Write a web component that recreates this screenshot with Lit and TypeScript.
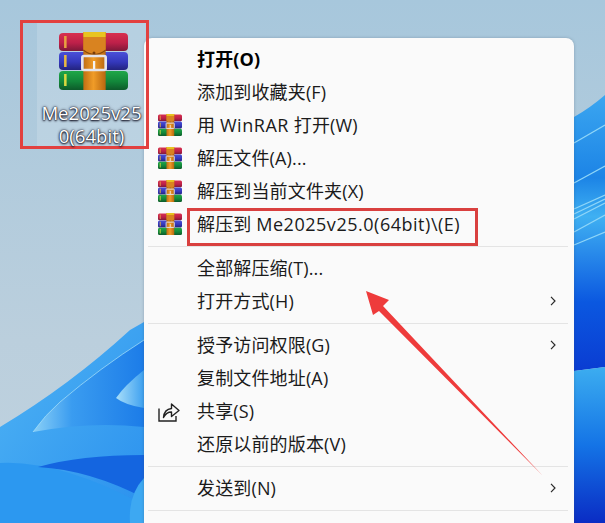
import { LitElement, html, css } from "lit";
import { customElement } from "lit/decorators.js";

const rarIcon = (cls: string, id: string) => html`<svg class=${cls} viewBox="0 0 68 58" preserveAspectRatio="none" aria-hidden="true">
  <defs>
    <linearGradient id="${id}r" x1="0" y1="0" x2="0" y2="1"><stop offset="0" stop-color="#d8304f"/><stop offset=".55" stop-color="#bd2049"/><stop offset="1" stop-color="#7d1838"/></linearGradient>
    <linearGradient id="${id}b" x1="0" y1="0" x2="0" y2="1"><stop offset="0" stop-color="#4a50d8"/><stop offset=".55" stop-color="#3438bc"/><stop offset="1" stop-color="#23237e"/></linearGradient>
    <linearGradient id="${id}g" x1="0" y1="0" x2="0" y2="1"><stop offset="0" stop-color="#1fa748"/><stop offset=".55" stop-color="#12873a"/><stop offset="1" stop-color="#0d5a2a"/></linearGradient>
    <linearGradient id="${id}o" x1="0" y1="0" x2="1" y2="0"><stop offset="0" stop-color="#c06e14"/><stop offset=".45" stop-color="#f09c28"/><stop offset="1" stop-color="#b86610"/></linearGradient>
  </defs>
  <rect x="0" y="1" width="68" height="18" rx="4" fill="url(#${id}r)"/>
  <rect x="0" y="20" width="68" height="18" rx="4" fill="url(#${id}b)"/>
  <rect x="0" y="39" width="68" height="19" rx="4" fill="url(#${id}g)"/>
  <rect x="5" y="4" width="2.5" height="12" fill="#e8a040"/>
  <rect x="5" y="23" width="2.5" height="12" fill="#e8b840"/>
  <rect x="5" y="42" width="2.5" height="12" fill="#d8d840"/>
  <rect x="24" y="0" width="22" height="58" fill="url(#${id}o)"/>
  <rect x="24" y="0" width="22" height="5" fill="#e8c420"/>
  <path d="M24 5 H46 V18 Q35 27 24 18Z" fill="#d98320"/>
  <path d="M24 18 Q35 27 46 18" fill="none" stroke="#8a4a0c" stroke-width="1"/>
  <circle cx="34.5" cy="21" r="1.5" fill="#7a3d08"/>
  <rect x="23" y="24" width="23" height="14" rx="1.5" fill="none" stroke="#e4e4ec" stroke-width="2.6"/>
  <rect x="33.5" y="29" width="2.2" height="8" fill="#f4f4f4"/>
</svg>`;

const shareIcon = html`<svg class="share" viewBox="0 0 22 21" aria-hidden="true">
  <path d="M1 7.5V20H18V15" fill="none" stroke="#222" stroke-width="1.4"/>
  <path d="M5.5 16.5C6 10.5 9 8 13.5 7.5V3L21 9.5L13.5 15.5V11C10.5 11 7.5 12.5 5.5 16.5Z" fill="none" stroke="#222" stroke-width="1.4" stroke-linejoin="round"/>
</svg>`;

const chevron = html`<svg class="chev" viewBox="0 0 6 10" aria-hidden="true"><path d="M1 .8L5 5L1 9.2" fill="none" stroke="#2a2a2a" stroke-width="1.2"/></svg>`;

type Row = { t: string; lat?: string; end?: string; icon?: "rar" | "share"; bold?: boolean; sub?: boolean; mark?: boolean };
const groups: Row[][] = [
  [
    { t: "打开(O)", bold: true },
    { t: "添加到收藏夹(F)" },
    { t: "用 ", lat: "WinRAR", end: " 打开(W)", icon: "rar" },
    { t: "解压文件(A)...", icon: "rar" },
    { t: "解压到当前文件夹(X)", icon: "rar" },
    { t: "解压到 ", lat: "Me2025v25.0(64bit)\\(E)", icon: "rar", mark: true },
  ],
  [{ t: "全部解压缩(T)..." }, { t: "打开方式(H)", sub: true }],
  [
    { t: "授予访问权限(G)", sub: true },
    { t: "复制文件地址(A)" },
    { t: "共享(S)", icon: "share" },
    { t: "还原以前的版本(V)" },
  ],
  [{ t: "发送到(N)", sub: true }],
];

@customElement("app-root")
export class AppRoot extends LitElement {
  static styles = css`
    :host { display: block; width: 605px; height: 523px; position: relative; overflow: hidden; background: #b5cddd; font-family: "Open Sans", "Noto Sans CJK SC", sans-serif; }
    .wall { position: absolute; inset: 0; width: 605px; height: 523px; display: block; }
    .desk { position: absolute; left: 20px; top: 20px; width: 129px; height: 129px; box-sizing: border-box; border: 3px solid #e2403f; z-index: 3; display: flex; flex-direction: column; align-items: center; padding: 9px 0 0 14px; }
    .desk::before { content: ""; position: absolute; left: 14px; right: 0; top: 0; bottom: 0; background: rgba(255,255,255,.16); }
    .big { width: 69px; height: 58px; position: relative; flex: none; margin-left: 3px; }
    .lbl { position: relative; width: 106px; text-align: center; margin-top: 11px; color: #fff; font-size: 18.6px; line-height: 23px; word-break: break-all; text-shadow: 0 1px 2px #112, 0 0 3px #223, 0 0 1px #112; font-family: "Open Sans", sans-serif; }
    .menu { position: absolute; left: 144px; top: 38px; width: 430px; height: 500px; box-sizing: border-box; padding-top: 4.5px; background: #fafafa; border-radius: 8px 8px 0 0; box-shadow: 0 0 3px rgba(60,80,100,.35); z-index: 2; }
    .row { position: relative; height: 33px; display: grid; grid-template-columns: 53px 1fr 24px; align-items: center; color: #1b1b1b; font-size: 18px; letter-spacing: .15px; white-space: nowrap; }
    .txt { position: relative; top: -1px; }
    .row.b { font-weight: 700; color: #000; }
    .lat { letter-spacing: .52px; }
    .slot { display: flex; padding-left: 14px; }
    .mini { width: 24px; height: 22px; display: block; }
    .share { width: 22px; height: 21px; display: block; }
    .chev { width: 6px; height: 10px; display: block; }
    .mark { position: absolute; left: 43px; top: 0px; width: 291px; height: 38px; box-sizing: border-box; border: 3px solid #d9403f; }
    .sep { height: 11px; display: flex; align-items: center; padding: 0 6px 0 4px; }
    .sep i { display: block; flex: 1; height: 1px; background: #e4e4e4; }
    .arrow { position: absolute; left: 0; top: 0; width: 605px; height: 523px; z-index: 4; pointer-events: none; }
  `;

  render() {
    let n = 0;
    return html`
      <svg class="wall" viewBox="0 0 605 523" aria-hidden="true">
        <defs>
          <linearGradient id="sky" x1="0" y1="0" x2="0" y2="1"><stop offset="0" stop-color="#a7c7dc"/><stop offset=".65" stop-color="#bbcfdd"/><stop offset="1" stop-color="#bfd2df"/></linearGradient>
          <linearGradient id="r1" x1="0" y1="0" x2="0" y2="1"><stop offset="0" stop-color="#3ba6f0"/><stop offset=".3" stop-color="#1c84e6"/><stop offset=".44" stop-color="#3fb0f2"/><stop offset=".75" stop-color="#0b58e0"/><stop offset="1" stop-color="#0a3cd2"/></linearGradient>
          <linearGradient id="r2" x1="0" y1="0" x2="0" y2="1"><stop offset="0" stop-color="#3cadf0"/><stop offset=".5" stop-color="#1474e6"/><stop offset="1" stop-color="#0a2cc4"/></linearGradient>
          <linearGradient id="l1" x1="0" y1="0" x2="1" y2="1"><stop offset="0" stop-color="#4fb4f4"/><stop offset="1" stop-color="#2a90ee"/></linearGradient>
          <linearGradient id="l2" x1="0" y1="0" x2="1" y2="0"><stop offset="0" stop-color="#8ad0f7"/><stop offset=".35" stop-color="#3a9cf0"/><stop offset="1" stop-color="#1c7ce8"/></linearGradient>
          <linearGradient id="l3" x1="0" y1="0" x2="1" y2="0"><stop offset="0" stop-color="#a8def9"/><stop offset="1" stop-color="#3da0f0"/></linearGradient>
        </defs>
        <rect width="605" height="523" fill="url(#sky)"/>
        <path d="M574 117 Q590 108 605 95 V367 L574 371Z" fill="url(#r1)"/>
        <path d="M574 371 L605 367 V523 H574Z" fill="url(#r2)"/>
        <g fill="none" stroke="#8fd6f8" stroke-width="1.2">
          <path d="M574 143 L605 125"/>
          <path d="M574 183 L605 166"/>
          <path d="M574 209 L605 195"/>
          <path d="M574 214 L605 199"/>
          <path d="M574 219 L605 203"/>
          <path d="M574 232 L605 215"/>
          <path d="M574 245 L605 232"/>
        </g>
        <path d="M0 427 Q70 385 130 330 L144 322 V523 H0Z" fill="url(#l1)"/>
        <path d="M33 432 Q45 415 60 402 Q100 368 144 340 V427 Q90 421 33 432Z" fill="url(#l2)"/>
        <path d="M116 398 Q125 385 144 370 V408 Q125 405 116 398Z" fill="url(#l3)"/>
        <path d="M0 463 Q60 460 144 505 V523 H0Z" fill="#2c98f0"/>
        <path d="M38 467 Q80 455 144 455 V498 Q90 470 38 467Z" fill="#1465e0"/>
        <path d="M144 478 Q128 495 130 523 H144Z" fill="#3da8f2"/>
        <path d="M33 432 Q45 415 60 402 Q100 368 144 340" fill="none" stroke="#9edaf8" stroke-width=".8"/>
      </svg>

      <div class="menu">
        ${groups.map(
          (g, i) => html`
            ${i > 0 ? html`<div class="sep"><i></i></div>` : ""}
            ${g.map((r) => {
              const id = `m${n++}`;
              return html`<div class="row ${r.bold ? "b" : ""}">
                <span class="slot">${r.icon === "rar" ? rarIcon("mini", id) : r.icon === "share" ? shareIcon : ""}</span>
                <span class="txt">${r.t}${r.lat ? html`<span class="lat">${r.lat}</span>` : ""}${r.end ?? ""}</span>
                ${r.sub ? chevron : ""}
                ${r.mark ? html`<span class="mark"></span>` : ""}
              </div>`;
            })}
          `
        )}
        <div class="sep"><i></i></div>
      </div>

      <div class="desk">
        ${rarIcon("big", "d")}
        <div class="lbl">Me2025v250(64bit)</div>
      </div>

      <svg class="arrow" viewBox="0 0 605 523" aria-hidden="true">
        <path d="M366 291 L389 300 L383 306 L543 476 L379 311 L373 315Z" fill="#ee3b3b"/>
      </svg>
    `;
  }
}
